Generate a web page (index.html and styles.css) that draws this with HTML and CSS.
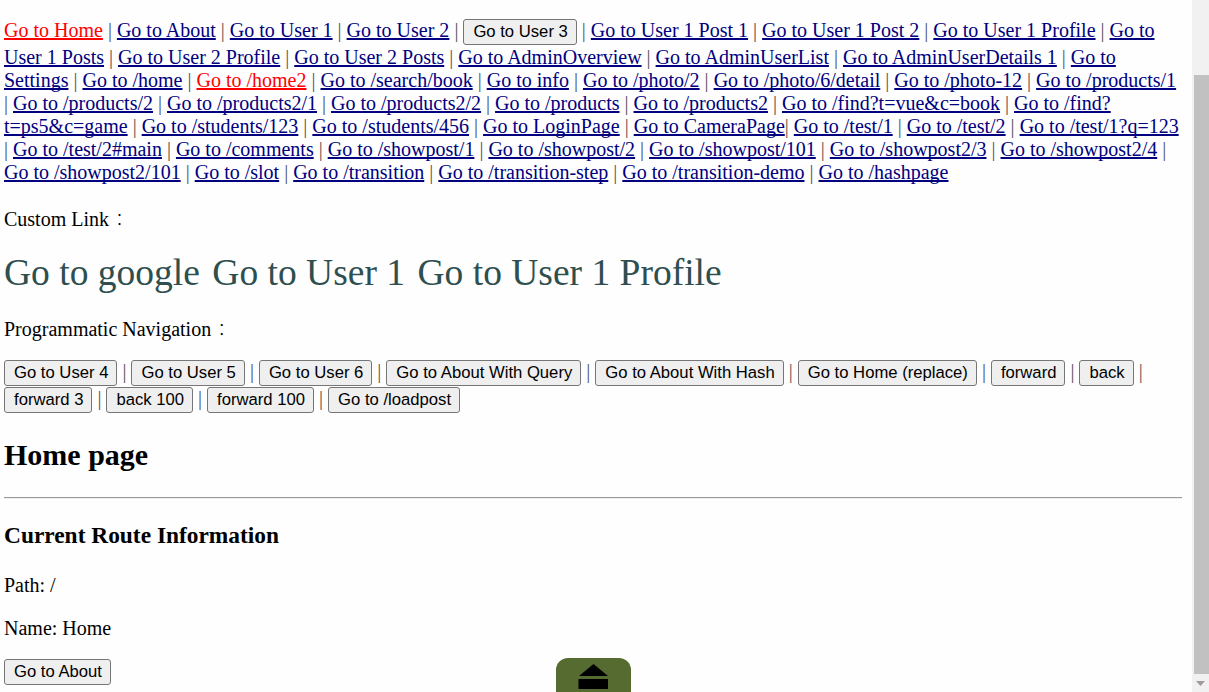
FILE: index.html
```html
<!DOCTYPE html>
<html lang="en">
<head>
<meta charset="utf-8">
<title>Router demo</title>
<link rel="stylesheet" href="styles.css">
</head>
<body>
<div class="app">
<main class="page">
<nav class="links">
<div class="line first"><a class="active">Go to Home</a> | <a>Go to About</a> | <a>Go to User 1</a> | <a>Go to User 2</a> | <button>Go to User 3</button> | <a>Go to User 1 Post 1</a> | <a>Go to User 1 Post 2</a> | <a>Go to User 1 Profile</a> | <a>Go to</a></div>
<div class="line"><a>User 1 Posts</a> | <a>Go to User 2 Profile</a> | <a>Go to User 2 Posts</a> | <a>Go to AdminOverview</a> | <a>Go to AdminUserList</a> | <a>Go to AdminUserDetails 1</a> | <a>Go to</a></div>
<div class="line"><a>Settings</a> | <a>Go to /home</a> | <a class="active">Go to /home2</a> | <a>Go to /search/book</a> | <a>Go to info</a> | <a>Go to /photo/2</a> | <a>Go to /photo/6/detail</a> | <a>Go to /photo-12</a> | <a>Go to /products/1</a></div>
<div class="line">| <a>Go to /products/2</a> | <a>Go to /products2/1</a> | <a>Go to /products2/2</a> | <a>Go to /products</a> | <a>Go to /products2</a> | <a>Go to /find?t=vue&amp;c=book</a> | <a>Go to /find?</a></div>
<div class="line"><a>t=ps5&amp;c=game</a> | <a>Go to /students/123</a> | <a>Go to /students/456</a> | <a>Go to LoginPage</a> | <a>Go to CameraPage</a>| <a>Go to /test/1</a> | <a>Go to /test/2</a> | <a>Go to /test/1?q=123</a></div>
<div class="line">| <a>Go to /test/2#main</a> | <a>Go to /comments</a> | <a>Go to /showpost/1</a> | <a>Go to /showpost/2</a> | <a>Go to /showpost/101</a> | <a>Go to /showpost2/3</a> | <a>Go to /showpost2/4</a> |</div>
<div class="line"><a>Go to /showpost2/101</a> | <a>Go to /slot</a> | <a>Go to /transition</a> | <a>Go to /transition-step</a> | <a>Go to /transition-demo</a> | <a>Go to /hashpage</a></div>
</nav>
<p class="label custom-label">Custom Link<span class="colon">：</span></p>
<div class="custom"><a>Go to google</a><a>Go to User 1</a><a>Go to User 1 Profile</a></div>
<p class="label prog-label">Programmatic Navigation<span class="colon">：</span></p>
<div class="buttons">
<div class="line row"><button>Go to User 4</button> | <button>Go to User 5</button> | <button>Go to User 6</button> | <button>Go to About With Query</button> | <button>Go to About With Hash</button> | <button>Go to Home (replace)</button> | <button>forward</button> | <button>back</button> |</div>
<div class="line row"><button>forward 3</button> | <button>back 100</button> | <button>forward 100</button> | <button>Go to /loadpost</button></div>
</div>
<h2>Home page</h2>
<hr>
<h3>Current Route Information</h3>
<p class="info">Path: /</p>
<p class="info">Name: Home</p>
<button class="about">Go to About</button>
</main>
<aside class="scrollbar">
<div class="thumb"></div>
<svg class="arrow" width="17" height="18" viewBox="0 0 17 18"><path d="M4 7h9L8.500 12z" fill="#a3989f"/></svg>
</aside>
<div class="eject"><svg width="75" height="34" viewBox="0 0 75 34"><path d="M37.500 6L52 18H23zM22.500 21H52v10H22.500z" fill="#000"/></svg></div>
</div>
</body>
</html>
```
FILE: styles.css
```css
* { box-sizing: border-box; }
body {
  margin: 0;
  background: #fefefe;
  color: #000;
  font: 20px/23px "Liberation Serif", "Noto Sans CJK SC", serif;
}
.app {
  position: relative;
  display: flex;
  width: 1209px;
  height: 692px;
  overflow: hidden;
}
.page { flex: 1; min-width: 0; padding: 19px 10px 0 4px; }
.line { height: 23px; white-space: nowrap; color: #555; }
.line.first { height: 27px; }
.links a { color: #000080; text-decoration: underline; text-decoration-thickness: 2px; text-underline-offset: 1px; text-decoration-skip-ink: none; }
.links a.active { color: #f00; }
button {
  height: 26px;
  margin: 0;
  padding: 0 8px 1px 9px;
  border: 1px solid #767676;
  border-radius: 3px;
  background: #efefef;
  color: #000;
  font: 16.667px/19px "Liberation Sans", sans-serif;
}
.label { margin: 0; height: 23px; }
.colon { margin-left: 2px; font-family: "Noto Sans CJK JP", sans-serif; font-size: 17px; font-weight: 300; }
.colon { display: inline-block; height: 23px; line-height: 21px; vertical-align: top; }
.custom-label { margin-top: 24px; }
.custom { display: flex; gap: 12.500px; margin-top: 20px; height: 43px; font-size: 37.5px; line-height: 43px; color: #2f4f4f; white-space: nowrap; }
.prog-label { margin-top: 24px; }
.buttons { margin-top: 19px; }
.line.row { height: 26.500px; }
h2 { margin: 25px 0; font-size: 30px; line-height: 34px; }
hr { margin: 0; height: 2px; border: 0; border-top: 1px solid #9a9a9a; border-bottom: 1px solid #eee; }
h3 { margin: 23px 0 25px; font-size: 23.4px; line-height: 27px; }
.info { margin: 0 0 20px; }
.about { display: block; margin-top: -1px; }
.scrollbar { width: 17px; background: #f1f1f1; }
.thumb { width: 15px; height: 599px; margin: 75px 0 0 2px; background: #c1c1c1; }
.arrow { display: block; }
.eject { position: absolute; left: 556px; bottom: 0; width: 75px; height: 34px; border-radius: 12px 12px 0 0; background: #556b2f; }
.eject svg { display: block; }
```
